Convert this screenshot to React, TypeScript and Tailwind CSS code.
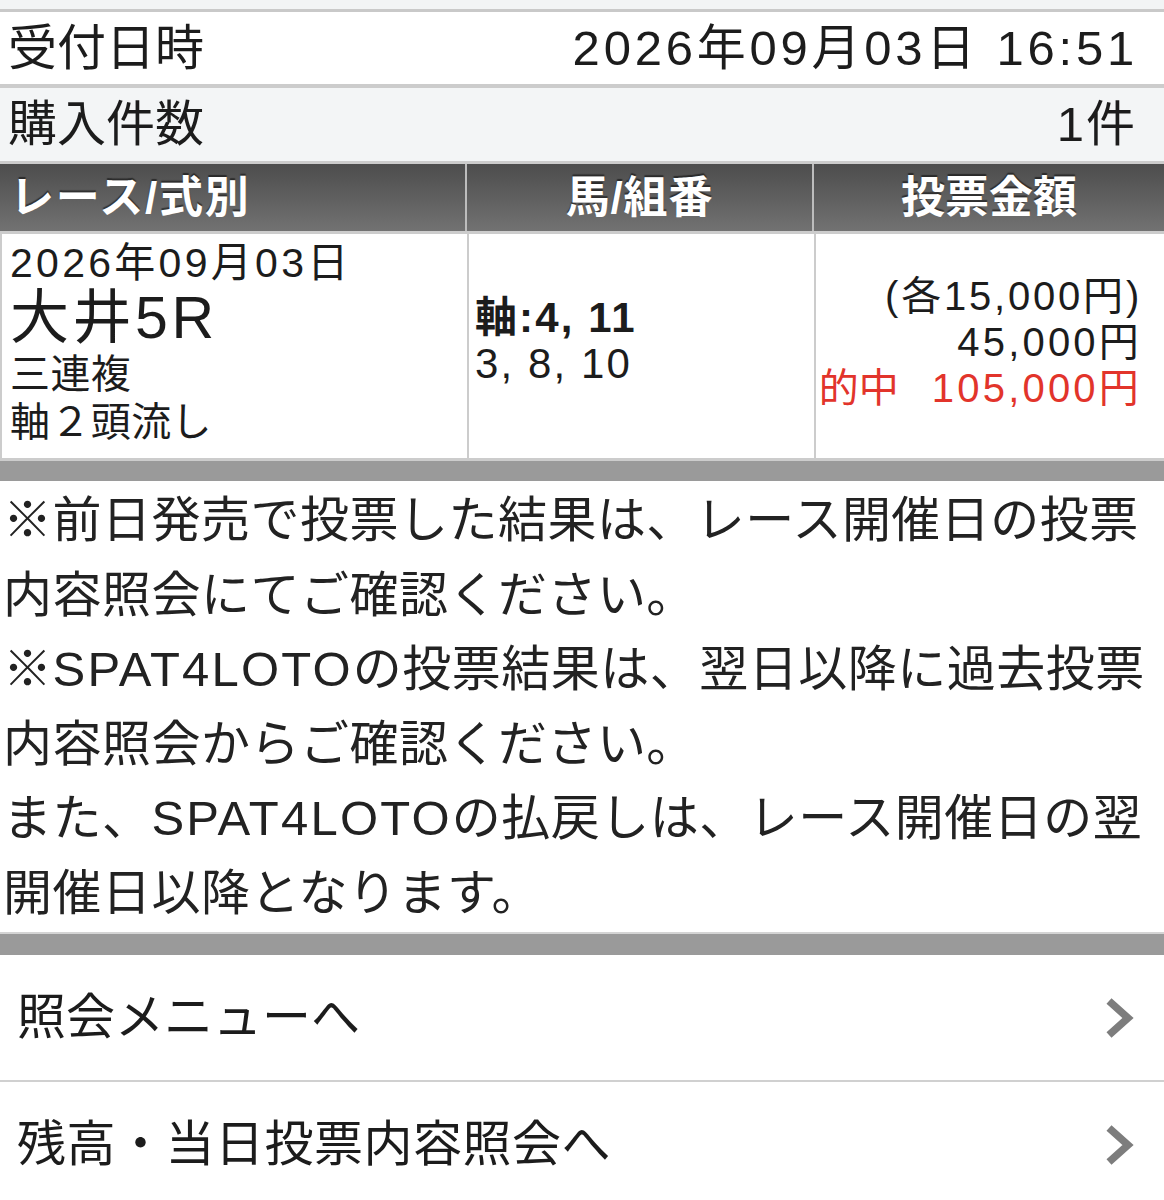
import React from "react";

const font = { fontFamily: '"Liberation Sans", "Noto Sans CJK JP", sans-serif' };

function Chevron() {
  return (
    <svg width="30" height="44" viewBox="0 0 30 44" className="shrink-0">
      <path d="M5 5 L24 22 L5 39" fill="none" stroke="#7d7d7d" strokeWidth="7.5" strokeLinejoin="miter" strokeLinecap="butt" />
    </svg>
  );
}

export default function App() {
  return (
    <div className="w-[1164px] bg-white text-[#1c1c1c]" style={font}>
      <div className="h-[9px] bg-[#f2f4f5]" />
      <div className="h-[3px] bg-[#c9c9c9]" />
      <div className="flex h-[72px] items-center justify-between bg-white pl-[8px] pr-[26px] text-[49px] leading-none">
        <span>受付日時</span>
        <span className="tracking-[0.077em]">2026年09月03日 16:51</span>
      </div>
      <div className="h-[4px] bg-[#cccccc]" />
      <div className="flex h-[73px] items-center justify-between bg-[#f3f5f6] pl-[8px] pr-[27px] text-[49px] leading-none">
        <span>購入件数</span>
        <span className="tracking-[0.04em]">1件</span>
      </div>
      <div className="h-[3px] bg-[#cccccc]" />
      <div className="grid grid-cols-[465px_345px_350px] gap-x-[2px] border-r-[2px] border-[#c4c4c4] bg-[#bdbdbd]">
        <div className="flex h-[67px] items-center bg-gradient-to-b from-[#4d4d4d] to-[#727272] pl-[10px] text-[44px] font-bold tracking-[0.04em] text-white [text-shadow:0_-2px_1px_rgba(0,0,0,0.5)]">
          レース/式別
        </div>
        <div className="flex h-[67px] items-center justify-center bg-gradient-to-b from-[#4d4d4d] to-[#727272] text-[44px] font-bold tracking-[0.02em] text-white [text-shadow:0_-2px_1px_rgba(0,0,0,0.5)]">
          馬/組番
        </div>
        <div className="flex h-[67px] items-center justify-center bg-gradient-to-b from-[#4d4d4d] to-[#727272] text-[44px] font-bold text-white [text-shadow:0_-2px_1px_rgba(0,0,0,0.5)]">
          投票金額
        </div>
      </div>
      <div className="grid grid-cols-[465px_345px_350px] gap-x-[2px] border-x-[2px] border-t-[3px] border-b-[3px] border-[#cccccc] bg-[#cccccc]">
        <div className="flex h-[224px] flex-col bg-white pl-[8px] pt-[6px]">
          <span className="text-[41px] leading-[46px] tracking-[0.08em]">2026年09月03日</span>
          <span className="text-[59px] leading-[64px] tracking-[0.06em]">大井5R</span>
          <span className="text-[40px] leading-[48px] tracking-[0.01em]">三連複</span>
          <span className="text-[40px] leading-[48px] tracking-[0.01em]">軸２頭流し</span>
        </div>
        <div className="flex h-[224px] flex-col justify-center bg-white pl-[6px] pb-[10px]">
          <span className="text-[42px] font-bold leading-[46px] tracking-[0.05em]">軸:4, 11</span>
          <span className="text-[42px] leading-[46px] tracking-[0.05em]">3, 8, 10</span>
        </div>
        <div className="flex h-[224px] flex-col items-end justify-center whitespace-nowrap bg-white pr-[24px] pb-[8px]">
          <span className="text-[40px] leading-[46px] tracking-[0.07em]">(各15,000円)</span>
          <span className="text-[40px] leading-[46px] tracking-[0.08em]">45,000円</span>
          <span className="flex text-[40px] leading-[46px] text-[#e2342b]">
            <span>的中</span>
            <span className="ml-[33px] tracking-[0.08em]">105,000円</span>
          </span>
        </div>
      </div>
      <div className="h-[20px] bg-[#9a9a9a]" />
      <div className="px-[3px] py-[2px] text-[49px] leading-[74.5px] tracking-[0.01em] text-[#222]">
        <div>※前日発売で投票した結果は、レース開催日の投票</div>
        <div>内容照会にてご確認ください。</div>
        <div>
          ※<span className="tracking-[0.045em]">SPAT4LOTO</span>の投票結果は、翌日以降に過去投票
        </div>
        <div>内容照会からご確認ください。</div>
        <div>
          また、<span className="tracking-[0.045em]">SPAT4LOTO</span>の払戻しは、レース開催日の翌
        </div>
        <div>開催日以降となります。</div>
      </div>
      <div className="h-[2px] bg-[#d4d4d4]" />
      <div className="h-[21px] bg-[#9a9a9a]" />
      <div className="flex h-[125px] items-center justify-between bg-white pl-[17px] pr-[30px] text-[49px]">
        <span>照会メニューへ</span>
        <Chevron />
      </div>
      <div className="h-[2px] bg-[#d0d0d0]" />
      <div className="flex h-[125px] items-center justify-between bg-white pl-[17px] pr-[30px] text-[49px]">
        <span className="tracking-[0.01em]">残高・当日投票内容照会へ</span>
        <Chevron />
      </div>
    </div>
  );
}
